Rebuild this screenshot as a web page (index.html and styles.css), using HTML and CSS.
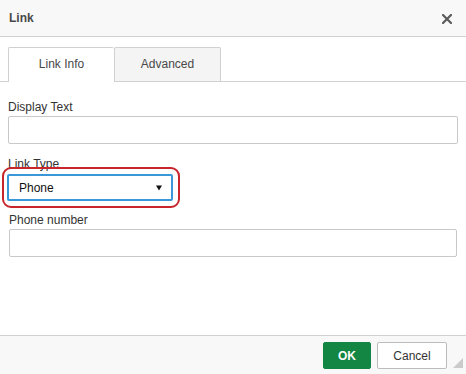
FILE: index.html
```html
<!DOCTYPE html>
<html>
<head>
<meta charset="utf-8">
<link rel="stylesheet" href="styles.css">
</head>
<body>
<div class="dialog">
  <div class="header">
    <span class="title">Link</span>
    <svg class="close" width="10" height="10" viewBox="0 0 10 10"><path d="M1 1 L9 9 M9 1 L1 9" stroke="#5a5a5a" stroke-width="2.2" stroke-linecap="square"/></svg>
  </div>
  <div class="tabbar">
    <div class="tab active">Link Info</div>
    <div class="tab">Advanced</div>
  </div>
  <div class="content">
    <div class="field">
      <div class="label">Display Text</div>
      <div class="input"></div>
    </div>
    <div class="field type">
      <div class="label">Link Type</div>
      <div class="select-wrap">
        <div class="select">
          <span>Phone</span>
          <svg width="6" height="6" viewBox="0 0 6 6"><path d="M0 0.5 H6 L3 5.5 Z" fill="#111"/></svg>
        </div>
      </div>
    </div>
    <div class="field phone">
      <div class="label">Phone number</div>
      <div class="input"></div>
    </div>
  </div>
  <div class="footer">
    <button class="btn ok">OK</button>
    <button class="btn cancel">Cancel</button>
    <span class="grip"></span>
  </div>
</div>
</body>
</html>
```

FILE: styles.css
```css
html, body {
  margin: 0;
  padding: 0;
  background: #fff;
}
body {
  font-family: "Liberation Sans", Arial, sans-serif;
  font-size: 12px;
  color: #333;
}
.dialog {
  width: 466px;
  height: 374px;
  display: flex;
  flex-direction: column;
  overflow: hidden;
}
.header {
  height: 36px;
  background: #f8f8f8;
  border-bottom: 1px solid #d1d1d1;
  display: flex;
  align-items: center;
  justify-content: space-between;
  padding: 0 14px 0 9px;
  flex: none;
}
.title {
  font-weight: bold;
  font-size: 12px;
  color: #484848;
}
.close {
  display: block;
  margin-top: 1px;
}
.tabbar {
  display: flex;
  padding: 10px 0 0 8px;
  border-bottom: 1px solid #d1d1d1;
  flex: none;
}
.tab {
  width: 105px;
  height: 33px;
  line-height: 33px;
  text-align: center;
  border: 1px solid #d1d1d1;
  border-bottom: none;
  border-radius: 2px 2px 0 0;
  background: #f4f4f4;
  color: #484848;
  margin-bottom: -1px;
  box-sizing: content-box;
  position: relative;
}
.tab.active {
  background: #fff;
  height: 34px;
  border-right: none;
}
.content {
  flex: 1;
}
.field {
  padding: 0 8px;
}
.label {
  line-height: 16px;
  color: #333;
}
.field:first-child .label {
  margin-top: 17px;
  margin-bottom: 1px;
}
.input {
  height: 26px;
  border: 1px solid #c9c9c9;
  border-radius: 2px;
  background: #fff;
}
.type .label {
  margin-top: 12px;
  margin-bottom: 2px;
}
.select-wrap {
  position: relative;
  width: 166px;
  margin-left: -1px;
}
.select-wrap::after {
  content: "";
  position: absolute;
  top: -7px;
  left: -5px;
  right: -7px;
  bottom: -7px;
  border: 2px solid #c8262c;
  border-radius: 9px;
  pointer-events: none;
}
.select {
  height: 23px;
  border: 2px solid #3a98d8;
  border-radius: 2px;
  display: flex;
  align-items: center;
  justify-content: space-between;
  padding: 0 9px 0 10px;
  color: #111;
  font-size: 12px;
}
.select svg {
  display: block;
}
.phone {
  padding: 0 9px;
}
.phone .label {
  margin-top: 11px;
  margin-bottom: 1px;
}
.footer {
  flex: none;
  background: #f8f8f8;
  border-top: 1px solid #d1d1d1;
  display: flex;
  justify-content: flex-end;
  align-items: flex-start;
  gap: 6px;
  padding: 6px 19px 0 0;
  box-sizing: border-box;
  height: 39px;
  position: relative;
}
.btn {
  height: 27px;
  font-family: "Liberation Sans", Arial, sans-serif;
  font-size: 12px;
  border-radius: 2px;
  padding: 0;
  margin: 0;
}
.ok {
  width: 48px;
  background: #128642;
  color: #fff;
  font-weight: bold;
  border: 1px solid #128642;
}
.cancel {
  width: 70px;
  background: #fff;
  color: #333;
  border: 1px solid #bcbcbc;
}
.grip {
  position: absolute;
  right: 3px;
  bottom: 6px;
  width: 0;
  height: 0;
  border-left: 10px solid transparent;
  border-bottom: 10px solid #cbcbcb;
}
```
